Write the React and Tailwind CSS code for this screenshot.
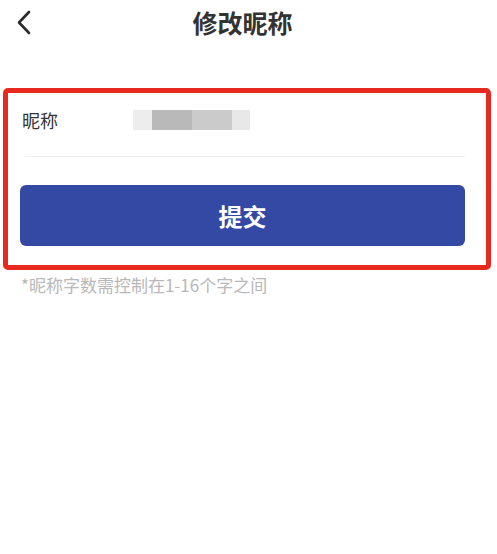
import React from 'react';

const font = { fontFamily: '"Noto Sans CJK SC", "Noto Sans", sans-serif' };

const BackIcon = () => (
  <svg width="16" height="26" viewBox="0 0 16 26" fill="none">
    <path d="M13 3L3 13.5L13 24" stroke="#2b2b2b" strokeWidth="2.6" strokeLinecap="round" strokeLinejoin="round" />
  </svg>
);

const App = () => (
  <div className="w-[497px] h-[554px] bg-white overflow-hidden" style={font}>
    <header className="grid grid-cols-[48px_1fr_60px] items-center h-[44px]">
      <div className="pl-[16px] flex items-center">
        <BackIcon />
      </div>
      <h1 className="text-center text-[25px] font-bold text-[#333] leading-none">修改昵称</h1>
      <div />
    </header>

    <section className="mt-[44px] ml-[3px] w-[488px] border-[5px] border-[#e8291f] rounded-[5px]">
      <div className="flex items-center pl-[14px] pt-[15px] pb-[24px] h-[63px]">
        <span className="text-[18px] leading-[24px] text-[#333] w-[111px]">昵称</span>
        <div className="flex h-[20px] opacity-90">
          <div className="w-[19px] bg-[#ececec]" />
          <div className="w-[40px] bg-[#b2b2b2]" />
          <div className="w-[40px] bg-[#c6c6c6]" />
          <div className="w-[18px] bg-[#e6e6e6]" />
        </div>
      </div>
      <div className="h-px bg-[#eeeeee] ml-[17px] mr-[21px]" />
      <button className="mt-[28px] mb-[19px] ml-[12px] w-[445px] h-[61px] rounded-[6px] bg-[#3449a4] text-white text-[24px] font-bold flex items-center justify-center">
        提交
      </button>
    </section>

    <p className="mt-[4px] pl-[21px] text-[17px] leading-[22px] text-[#b8b8b8]">*昵称字数需控制在1-16个字之间</p>
  </div>
);

export default App;
